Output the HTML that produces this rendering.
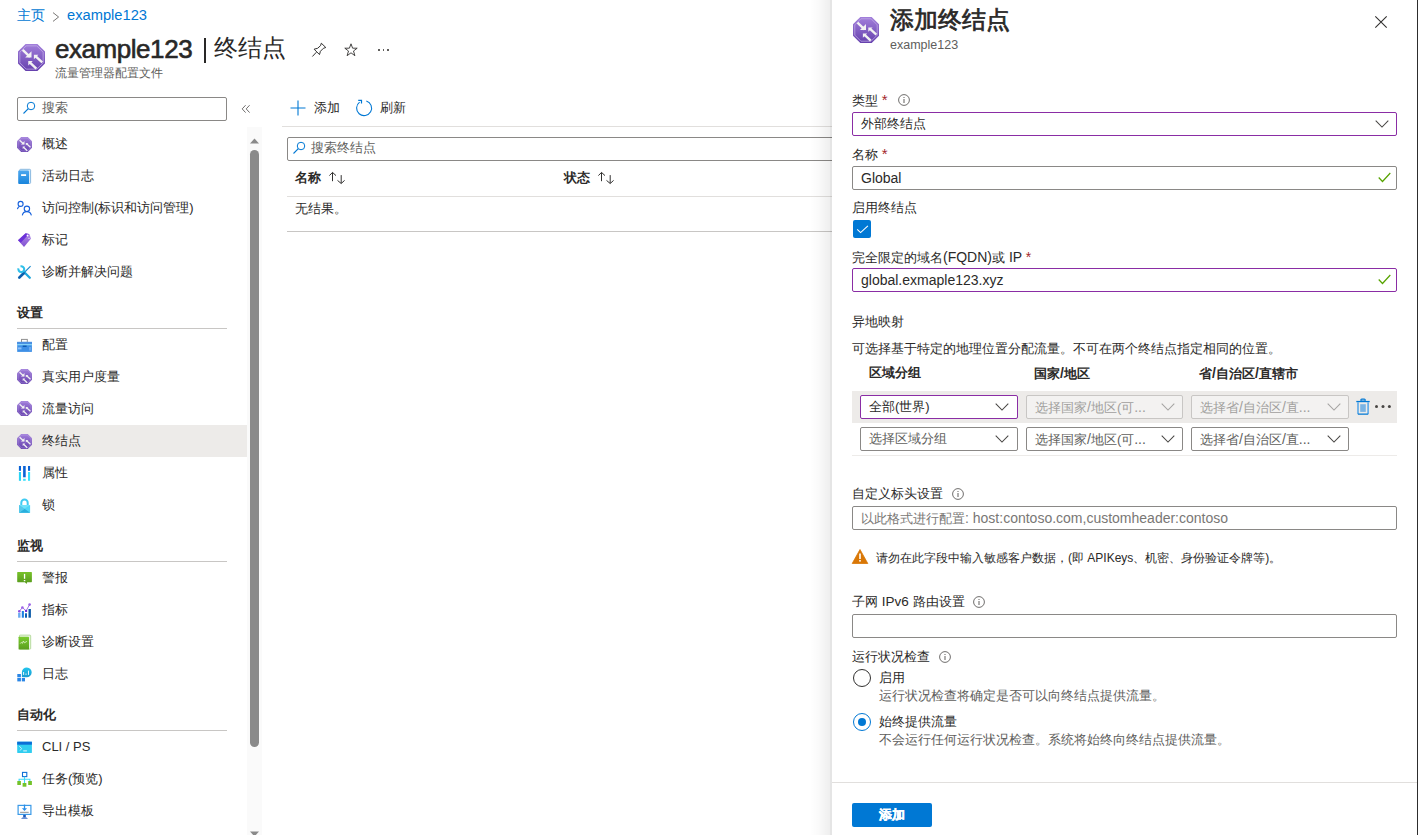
<!DOCTYPE html>
<html><head><meta charset="utf-8">
<style>
*{box-sizing:border-box;margin:0;padding:0}
html,body{width:1418px;height:835px;overflow:hidden;background:#fff}
body{font-family:"Liberation Sans",sans-serif;color:#2b2a29;font-size:13px;position:relative}
.a{position:absolute;white-space:nowrap;line-height:16px}
.bl{color:#0078d4}
.g{color:#605e5c}
.b{font-weight:bold}
.ln{position:absolute;height:1px;background:#e1dfdd}
.box{position:absolute;border:1px solid #8a8886;border-radius:2px;background:#fff;height:24px}
.pur{border-color:#8a2da5}
.dis{background:#f3f2f1;border-color:#c8c6c4;color:#a19f9d}
.ico{position:absolute;overflow:visible}
.mi{position:absolute;left:42px;line-height:16px;white-space:nowrap}
.mh{position:absolute;left:17px;line-height:16px;font-weight:bold;white-space:nowrap}
.red{color:#a4262c;font-size:15px}
.L{font-size:14px}
</style></head><body>
<svg width="0" height="0" style="position:absolute">
<defs>
<linearGradient id="tg" x1="0" y1="0" x2="0" y2="1"><stop offset="0" stop-color="#a27fdb"/><stop offset="1" stop-color="#6540ad"/></linearGradient>
<symbol id="tm" viewBox="0 0 26 26">
<path d="M7.3 0 H18.7 L26 7.3 V18.7 L18.7 26 H7.3 L0 18.7 V7.3 Z" fill="url(#tg)"/>
<path d="M7.9 1.8 H18.1 L24.2 7.9 V18.1 L18.1 24.2 H7.9 L1.8 18.1 V7.9 Z" fill="none" stroke="#c3aee8" stroke-width="0.9" opacity="0.8"/>
<path d="M4.5 5.6 L11.5 12.3" stroke="#f2f2f2" stroke-width="2.3"/>
<path d="M13 6.9 V13 H6.9 Z" fill="#f2f2f2"/>
<path d="M23.3 17.7 L16.8 11.7" stroke="#f2f2f2" stroke-width="2.3"/>
<path d="M15.3 10.4 H19.6 L15.3 14.8 Z" fill="#f2f2f2"/>
<path d="M17.7 23.7 L11.3 17.6" stroke="#f2f2f2" stroke-width="2.3"/>
<path d="M9.9 16.4 H14.2 L9.9 20.8 Z" fill="#f2f2f2"/>
</symbol>
<symbol id="info" viewBox="0 0 12 12"><circle cx="6" cy="6" r="5.4" fill="none" stroke="#605e5c" stroke-width="0.9"/><rect x="5.5" y="5" width="1" height="4" fill="#605e5c"/><rect x="5.5" y="3" width="1" height="1" fill="#605e5c"/></symbol>
<symbol id="chev" viewBox="0 0 14 8"><path d="M0.7 0.7 L7 7 L13.3 0.7" fill="none" stroke="#484644" stroke-width="1.05"/></symbol>
<symbol id="srch" viewBox="0 0 12 12" overflow="visible"><circle cx="8" cy="4" r="3.75" fill="none" stroke="#0078d4" stroke-width="1"/><path d="M5.3 6.7 L0.5 11.5" stroke="#0078d4" stroke-width="1.1"/></symbol>
</defs></svg>

<!-- breadcrumb -->
<div class="a bl" style="left:17px;top:7px;font-size:14px">主页</div>
<svg class="ico" style="left:52px;top:12px" width="8" height="11" viewBox="0 0 8 11"><path d="M1 0.6 L6.6 5 L1 9.4" fill="none" stroke="#797775" stroke-width="1"/></svg>
<div class="a bl" style="left:67px;top:7px;font-size:14.7px">example123</div>

<!-- title -->
<svg class="ico" style="left:18px;top:44px" width="27" height="27"><use href="#tm"/></svg>
<div class="a" style="left:55px;top:35px;font-size:26px;line-height:28px;color:#292827;letter-spacing:-0.45px;-webkit-text-stroke:0.6px #292827">example123</div>
<div class="ico" style="left:203.6px;top:37.5px;width:2px;height:25px;background:#292827"></div>
<div class="a" style="left:214px;top:34px;font-size:24px;line-height:28px;color:#292827">终结点</div>
<div class="a g" style="left:55px;top:65px;font-size:12px">流量管理器配置文件</div>
<svg class="ico" style="left:309px;top:40px" width="20" height="20" viewBox="0 0 20 20"><path d="M12.3 3.2 L16.8 7.5 L14.4 8.3 L11.4 11.3 L10.5 14.6 L5.1 9.2 L8.6 8.3 L11.6 5.6 Z M7.4 12.2 L3.4 16.5" fill="none" stroke="#323130" stroke-width="1" stroke-linejoin="round"/></svg>
<svg class="ico" style="left:344px;top:43px" width="14" height="14" viewBox="0 0 14 14"><path d="M7 0.8 L8.6 5.2 L13.2 5.2 L9.5 8 L10.9 12.7 L7 9.8 L3.1 12.7 L4.5 8 L0.8 5.2 L5.4 5.2 Z" fill="none" stroke="#323130" stroke-width="0.9"/></svg>
<div class="ico" style="left:378px;top:49px;width:1.6px;height:1.8px;background:#605e5c"></div>
<div class="ico" style="left:382.5px;top:49px;width:1.6px;height:1.8px;background:#605e5c"></div>
<div class="ico" style="left:387px;top:49px;width:1.6px;height:1.8px;background:#605e5c"></div>

<!-- sidebar search -->
<div class="box" style="left:17px;top:97px;width:210px;height:24px"></div>
<svg class="ico" style="left:23px;top:102px" width="12" height="12"><use href="#srch"/></svg>
<div class="a g" style="left:42px;top:100px;font-size:13px">搜索</div>
<svg class="ico" style="left:240px;top:103px" width="12" height="12" viewBox="0 0 12 12"><path d="M5.6 2.2 L2.2 5.9 L5.6 9.6 M9.6 2.2 L6.2 5.9 L9.6 9.6" fill="none" stroke="#605e5c" stroke-width="0.9"/></svg>

<!-- scrollbar -->
<div class="ico" style="left:247px;top:127px;width:15px;height:708px;background:#fafafa"></div>
<svg class="ico" style="left:250px;top:138px" width="9" height="6"><path d="M0 5.5 L4.5 0.5 L9 5.5 Z" fill="#8a8a8a"/></svg>
<div class="ico" style="left:250px;top:150px;width:9px;height:597px;background:#8a8a8a;border-radius:4.5px"></div>
<svg class="ico" style="left:250px;top:831px" width="9" height="6"><path d="M0 0.5 L9 0.5 L4.5 5.5 Z" fill="#8a8a8a"/></svg>

<!-- selected -->
<div class="ico" style="left:0;top:425px;width:247px;height:32px;background:#edebe9"></div>

<!-- menu items -->
<svg class="ico" style="left:17px;top:137px" width="15" height="15"><use href="#tm"/></svg>
<div class="mi" style="top:136px">概述</div>
<svg class="ico" style="left:14px;top:166px" width="22" height="22" viewBox="0 0 22 22"><defs><linearGradient id="bk" x1="0" y1="0" x2="0" y2="1"><stop offset="0" stop-color="#4ca6ee"/><stop offset="1" stop-color="#1a85dc"/></linearGradient></defs><rect x="5.6" y="3.3" width="11" height="14.2" rx="1" fill="#d9ebf9" stroke="#72a9d9" stroke-width="0.8"/><rect x="4.2" y="4.6" width="10.8" height="13.3" rx="1" fill="url(#bk)"/><rect x="7.1" y="8.2" width="5" height="1.8" fill="#fff"/></svg>
<div class="mi" style="top:168px">活动日志</div>
<svg class="ico" style="left:14px;top:198px" width="22" height="22" viewBox="0 0 22 22"><g fill="none" stroke="#1560dc" stroke-width="1.1"><circle cx="6.6" cy="5.9" r="2.5"/><path d="M3.4 11.1 Q3.9 9 5.6 8.3"/><circle cx="12.9" cy="10.8" r="2.7"/><path d="M8.3 17.4 Q8.9 13.6 12.8 13.6 Q16.6 13.6 17.4 17.4"/></g></svg>
<div class="mi" style="top:200px">访问控制(标识和访问管理)</div>
<svg class="ico" style="left:14px;top:230px" width="22" height="22" viewBox="0 0 22 22"><defs><linearGradient id="tgg" x1="0" y1="0" x2="0" y2="1"><stop offset="0" stop-color="#b48ee8"/><stop offset="1" stop-color="#7f4fd0"/></linearGradient></defs><path d="M4 10.3 L11.6 3.2 L15.6 4.2 L16.9 8.7 L10 17.1 Z" fill="url(#tgg)"/><path d="M4 10.3 L11.6 3.2 L15 4 L6.8 12.8 Z" fill="#6b32d8"/><circle cx="13.5" cy="5.5" r="0.9" fill="#fff"/><rect x="14.2" y="7.9" width="1.6" height="0.8" fill="#e8e0f8"/></svg>
<div class="mi" style="top:232px">标记</div>
<svg class="ico" style="left:14px;top:262px" width="22" height="22" viewBox="0 0 22 22"><path d="M16.6 4.2 L10.3 10.5" stroke="#1a8cd0" stroke-width="1.1"/><path d="M9.8 9.8 L15.8 15.8" stroke="#1ea7dc" stroke-width="2.3" stroke-linecap="round"/><path d="M9.6 11.3 L5.3 15.6" stroke="#0b5fae" stroke-width="2.7" stroke-linecap="round"/><path d="M4.5 6.4 A2.9 2.9 0 1 0 6.5 4.4" fill="none" stroke="#2fc0ea" stroke-width="2.1"/></svg>
<div class="mi" style="top:264px">诊断并解决问题</div>

<div class="mh" style="top:305px">设置</div>
<div class="ln" style="left:17px;top:328px;width:210px;background:#c8c6c4"></div>

<svg class="ico" style="left:14px;top:334px" width="22" height="22" viewBox="0 0 22 22"><rect x="7.5" y="5.4" width="5.8" height="3" fill="none" stroke="#8f8f8f" stroke-width="1"/><rect x="3.2" y="7.9" width="14.7" height="10" fill="#3d8fe6"/><rect x="3.2" y="10" width="14.7" height="1.3" fill="#84d2f8"/><rect x="3.2" y="7.9" width="14.7" height="2.1" fill="#4a90e2"/><rect x="8.7" y="11.6" width="3.9" height="1.3" fill="#0b55a8"/><rect x="4" y="13.4" width="3.5" height="2" fill="#8dc0f8"/><rect x="15" y="13" width="2" height="3.5" fill="#6aa8ee"/></svg>
<div class="mi" style="top:337px">配置</div>
<svg class="ico" style="left:17px;top:369px" width="15" height="15"><use href="#tm"/></svg>
<div class="mi" style="top:369px">真实用户度量</div>
<svg class="ico" style="left:17px;top:401px" width="15" height="15"><use href="#tm"/></svg>
<div class="mi" style="top:401px">流量访问</div>
<svg class="ico" style="left:17px;top:434px" width="15" height="15"><use href="#tm"/></svg>
<div class="mi" style="top:433px">终结点</div>
<svg class="ico" style="left:14px;top:462px" width="22" height="22" viewBox="0 0 22 22"><rect x="4.9" y="4" width="2.1" height="4.8" fill="#0a63d6"/><rect x="4.9" y="10" width="2.1" height="8.8" fill="#2ad4f4"/><rect x="9.1" y="4" width="2.6" height="11.3" fill="#0a63d6"/><rect x="9.1" y="16.8" width="2.6" height="2" fill="#3ee0fb"/><rect x="14" y="4" width="2.1" height="4.8" fill="#0a63d6"/><rect x="14" y="10" width="2.1" height="8.8" fill="#38e0fb"/></svg>
<div class="mi" style="top:465px">属性</div>
<svg class="ico" style="left:14px;top:494px" width="22" height="22" viewBox="0 0 22 22"><path d="M7.3 11.2 V8.8 A3.2 3.2 0 0 1 13.7 8.8 V11.2" fill="none" stroke="#3fcbf2" stroke-width="2"/><rect x="5" y="11.1" width="11.1" height="7.7" fill="#4fd6f7"/><path d="M5 11.1 L10.5 14.8 L16.1 11.1 Z" fill="#6fe2fa"/><path d="M5 18.8 L10.5 14.8 L16.1 18.8 Z" fill="#2aaedc"/><path d="M5 11.1 L10.5 14.8 L5 18.8 Z" fill="#55c8ea"/></svg>
<div class="mi" style="top:497px">锁</div>

<div class="mh" style="top:538px">监视</div>
<div class="ln" style="left:17px;top:561px;width:210px;background:#c8c6c4"></div>

<svg class="ico" style="left:14px;top:566px" width="22" height="22" viewBox="0 0 22 22"><defs><linearGradient id="al" x1="0" y1="0" x2="0" y2="1"><stop offset="0" stop-color="#78c22a"/><stop offset="1" stop-color="#5a9e1e"/></linearGradient></defs><rect x="3.2" y="6" width="14.7" height="10.2" rx="0.6" fill="url(#al)"/><path d="M10.8 16 L12.6 17.9 L13.2 16 Z" fill="#5a9e1e"/><rect x="9.9" y="7.9" width="1.3" height="4.9" fill="#fff"/><rect x="9.8" y="14" width="1.5" height="1.2" fill="#fff"/></svg>
<div class="mi" style="top:570px">警报</div>
<svg class="ico" style="left:14px;top:598px" width="22" height="22" viewBox="0 0 22 22"><rect x="4.1" y="14.8" width="2.4" height="4.9" fill="#6aaaf0"/><rect x="7.8" y="13" width="2.1" height="6.7" fill="#1a7fe0"/><rect x="11" y="15.3" width="2" height="4.4" fill="#0b5fb5"/><rect x="14.5" y="11" width="2.4" height="8.7" fill="#0a5aa8"/><path d="M5.3 13.3 L8.4 9.5 L12.1 12.9 L15.6 6.6" fill="none" stroke="#9a62e6" stroke-width="0.9"/><circle cx="5.3" cy="13.3" r="1.3" fill="#8f52e2"/><circle cx="8.4" cy="9.5" r="1.3" fill="#9a62e6"/><circle cx="12.1" cy="12.9" r="1.2" fill="#6a2fd8"/><circle cx="15.6" cy="6.6" r="1.3" fill="#9a62e6"/></svg>
<div class="mi" style="top:602px">指标</div>
<svg class="ico" style="left:14px;top:630px" width="22" height="22" viewBox="0 0 22 22"><defs><linearGradient id="gb" x1="0" y1="0" x2="0" y2="1"><stop offset="0" stop-color="#7acc2e"/><stop offset="1" stop-color="#5a9e1e"/></linearGradient></defs><rect x="5.4" y="5.1" width="11.3" height="14" rx="0.8" fill="#eaf4e2" stroke="#a8d48a" stroke-width="0.8"/><rect x="4.6" y="6.7" width="10.4" height="12.8" rx="0.6" fill="url(#gb)"/><path d="M6.2 13.6 L7.3 12.4 L8.3 13.4 L9.4 11 L10.4 12.8 L12.9 11.4" fill="none" stroke="#e4f4d4" stroke-width="0.8"/></svg>
<div class="mi" style="top:634px">诊断设置</div>
<svg class="ico" style="left:14px;top:662px" width="22" height="22" viewBox="0 0 22 22"><rect x="3.3" y="12" width="3.6" height="3.2" fill="#2a86e6"/><rect x="3.3" y="15.9" width="3.6" height="3.5" fill="#2a86e6"/><rect x="7.8" y="15.9" width="3.2" height="3.5" fill="#2a86e6"/><defs><linearGradient id="lg" x1="0" y1="0" x2="0" y2="1"><stop offset="0" stop-color="#22c6ee"/><stop offset="1" stop-color="#1a9ad0"/></linearGradient></defs><path d="M7.9 15 V10.3 A4.9 4.9 0 1 1 12.4 15.2 Z" fill="url(#lg)"/><rect x="9.1" y="10" width="1" height="2.9" fill="#e8f8fc"/><rect x="11.5" y="11.5" width="1" height="1.4" fill="#e8f8fc"/><rect x="14.1" y="8.6" width="0.9" height="4.3" fill="#fff"/></svg>
<div class="mi" style="top:666px">日志</div>

<div class="mh" style="top:707px">自动化</div>
<div class="ln" style="left:17px;top:730px;width:210px;background:#c8c6c4"></div>

<svg class="ico" style="left:14px;top:736px" width="22" height="22" viewBox="0 0 22 22"><rect x="3.2" y="5.7" width="14.7" height="11.2" rx="0.4" fill="#2fcdf0"/><rect x="3.2" y="5.7" width="14.7" height="3" fill="#0a6ed6"/><path d="M5.3 10.1 L7.6 12.6 L6 14.6" fill="none" stroke="#d8f4fc" stroke-width="0.9"/><rect x="9.2" y="14.1" width="3.7" height="1.5" fill="#a6e8f8"/></svg>
<div class="mi" style="top:739px">CLI / PS</div>
<svg class="ico" style="left:14px;top:768px" width="22" height="22" viewBox="0 0 22 22"><rect x="8.5" y="4.4" width="4.3" height="4.2" fill="none" stroke="#0f6fd6" stroke-width="1.1"/><path d="M10.5 8.7 V15 M5.1 13 V11.3 H15.9 V13" fill="none" stroke="#40d8f8" stroke-width="1.1"/><rect x="3.3" y="13" width="3.6" height="4" fill="#74c22a"/><rect x="8.6" y="15" width="3.8" height="3.7" fill="#74c22a"/><rect x="14.2" y="13" width="3.7" height="4" fill="#74c22a"/></svg>
<div class="mi" style="top:771px">任务(预览)</div>
<svg class="ico" style="left:14px;top:800px" width="22" height="22" viewBox="0 0 22 22"><rect x="4.1" y="5.4" width="12.8" height="9" fill="#fff" stroke="#3a9ae8" stroke-width="1.2"/><path d="M10.5 4.6 V9" stroke="#2b8ee8" stroke-width="1.3"/><path d="M7.9 8.3 H13.1 L10.5 11 Z" fill="#2b8ee8"/><rect x="6.1" y="11.8" width="8.6" height="1.1" fill="#9a9a9a"/><rect x="9.2" y="14.9" width="2.6" height="2.6" fill="#1a56b8"/><path d="M7 18.7 L8.5 17.4 H12.5 L14 18.7 Z" fill="#3a6fc8"/></svg>
<div class="mi" style="top:803px">导出模板</div>

<!-- toolbar -->
<svg class="ico" style="left:290px;top:100px" width="16" height="16" viewBox="0 0 16 16"><path d="M8 0.5 V15.5 M0.5 8 H15.5" stroke="#0078d4" stroke-width="1.1"/></svg>
<div class="a" style="left:314px;top:100px">添加</div>
<svg class="ico" style="left:352px;top:96px" width="24" height="24" viewBox="0 0 24 24"><path d="M14.35 4.95 A7.5 7.5 0 1 1 7.6 6.1" fill="none" stroke="#0078d4" stroke-width="1.1"/><path d="M6.2 4.3 H9.5 V7.6" fill="none" stroke="#0078d4" stroke-width="1.2"/></svg>
<div class="a" style="left:380px;top:100px">刷新</div>
<div class="ln" style="left:282px;top:126px;width:560px"></div>

<div class="box" style="left:287px;top:137px;width:560px;height:24px"></div>
<svg class="ico" style="left:293px;top:142px" width="12" height="12"><use href="#srch"/></svg>
<div class="a g" style="left:311px;top:140px">搜索终结点</div>

<div class="a b" style="left:295px;top:170px">名称</div>
<svg class="ico" style="left:322px;top:168px" width="30" height="22" viewBox="0 0 30 22"><path d="M7.4 7.6 L10.5 4.4 L14 7.6 M10.5 4.6 V13.2 M15.5 12.4 L19.2 15.5 L22.6 12.4 M19.2 15.3 V7.1" fill="none" stroke="#323130" stroke-width="1"/></svg>
<div class="a b" style="left:564px;top:170px">状态</div>
<svg class="ico" style="left:591px;top:168px" width="30" height="22" viewBox="0 0 30 22"><path d="M7.4 7.6 L10.5 4.4 L14 7.6 M10.5 4.6 V13.2 M15.5 12.4 L19.2 15.5 L22.6 12.4 M19.2 15.3 V7.1" fill="none" stroke="#323130" stroke-width="1"/></svg>
<div class="ln" style="left:287px;top:196px;width:560px"></div>
<div class="a" style="left:295px;top:201px">无结果。</div>
<div class="ln" style="left:287px;top:231px;width:560px;background:#c8c6c4"></div>

<!-- right panel -->
<div class="ico" style="left:810px;top:0;width:20px;height:835px;background:linear-gradient(to right,rgba(0,0,0,0),rgba(0,0,0,0.02) 40%,rgba(0,0,0,0.065))"></div>
<div class="ico" style="left:830px;top:0;width:2px;height:835px;background:rgba(0,0,0,0.1)"></div>
<div class="ico" style="left:832px;top:0;width:586px;height:835px;background:#fff"></div>

<svg class="ico" style="left:853px;top:17px" width="26" height="26"><use href="#tm"/></svg>
<div class="a" style="left:890px;top:6px;font-size:24px;line-height:28px;color:#292827;-webkit-text-stroke:0.7px #292827">添加终结点</div>
<div class="a g" style="left:890px;top:37px;font-size:12.5px">example123</div>
<svg class="ico" style="left:1375px;top:16px" width="12" height="12" viewBox="0 0 12 12"><path d="M0.3 0.3 L11.7 11.7 M11.7 0.3 L0.3 11.7" stroke="#323130" stroke-width="1.1"/></svg>

<div class="a" style="left:852px;top:92px">类型 <span class="red">*</span></div>
<svg class="ico" style="left:898px;top:94px" width="12" height="12"><use href="#info"/></svg>
<div class="box pur" style="left:852px;top:112px;width:545px"></div>
<div class="a" style="left:861px;top:116px">外部终结点</div>
<svg class="ico" style="left:1374.5px;top:119.5px" width="14" height="8"><use href="#chev"/></svg>

<div class="a" style="left:852px;top:146px">名称 <span class="red">*</span></div>
<div class="box" style="left:852px;top:166px;width:545px"></div>
<div class="a" style="left:861px;top:170px"><span class="L">Global</span></div>
<svg class="ico" style="left:1378px;top:172px" width="13" height="11" viewBox="0 0 13 11"><path d="M0.7 5.5 L4.5 9.5 L12.3 1" fill="none" stroke="#57a300" stroke-width="1.2"/></svg>

<div class="a" style="left:852px;top:200px">启用终结点</div>
<div class="ico" style="left:853px;top:220px;width:18px;height:18px;background:#0078d4;border-radius:2px"></div>
<svg class="ico" style="left:853px;top:220px" width="18" height="18" viewBox="0 0 18 18"><path d="M4.2 9.4 L7.6 12.6 L14.9 5.9" fill="none" stroke="#fff" stroke-width="1.1"/></svg>

<div class="a" style="left:852px;top:249px">完全限定的域名<span class="L">(FQDN)</span>或<span class="L"> IP </span><span class="red L">*</span></div>
<div class="box pur" style="left:852px;top:268px;width:545px"></div>
<div class="a" style="left:861px;top:272px"><span class="L">global.exmaple123.xyz</span></div>
<svg class="ico" style="left:1378px;top:274px" width="13" height="11" viewBox="0 0 13 11"><path d="M0.7 5.5 L4.5 9.5 L12.3 1" fill="none" stroke="#57a300" stroke-width="1.2"/></svg>

<div class="a" style="left:852px;top:314px">异地映射</div>
<div class="a" style="left:852px;top:341px">可选择基于特定的地理位置分配流量。不可在两个终结点指定相同的位置。</div>
<div class="a b" style="left:869px;top:365px">区域分组</div>
<div class="a b" style="left:1034px;top:365px">国家<span class="L">/</span>地区</div>
<div class="a b" style="left:1199px;top:365px">省<span class="L">/</span>自治区<span class="L">/</span>直辖市</div>

<div class="ico" style="left:852px;top:391px;width:545px;height:32px;background:#edebe9"></div>
<div class="box pur" style="left:860px;top:395px;width:158px"></div>
<div class="a" style="left:869px;top:399px">全部(世界)</div>
<svg class="ico" style="left:995px;top:403px" width="14" height="8"><use href="#chev"/></svg>
<div class="box dis" style="left:1026px;top:395px;width:157px"></div>
<div class="a" style="left:1035px;top:399px;color:#a19f9d">选择国家<span class="L">/</span>地区(可<span class="L">...</span></div>
<svg class="ico" style="left:1161px;top:403px;opacity:0.45" width="14" height="8"><use href="#chev"/></svg>
<div class="box dis" style="left:1191px;top:395px;width:158px"></div>
<div class="a" style="left:1200px;top:399px;color:#a19f9d">选择省<span class="L">/</span>自治区<span class="L">/</span>直<span class="L">...</span></div>
<svg class="ico" style="left:1327px;top:403px;opacity:0.45" width="14" height="8"><use href="#chev"/></svg>
<svg class="ico" style="left:1352px;top:395px" width="44" height="24" viewBox="0 0 44 24"><rect x="8.8" y="4.1" width="4.5" height="2" rx="1" fill="none" stroke="#0078d4" stroke-width="1.1"/><rect x="4.3" y="5.9" width="13.4" height="1.3" fill="#0078d4"/><rect x="5.2" y="7.2" width="1.6" height="11.8" fill="#5aa8e8"/><rect x="15.3" y="7.2" width="1.6" height="11.8" fill="#5aa8e8"/><rect x="5.8" y="18.4" width="10.5" height="1.4" rx="0.6" fill="#0078d4"/><rect x="8.2" y="9.2" width="5.6" height="7.7" fill="#7ab4e4"/><circle cx="24.5" cy="11.5" r="1.5" fill="#484644"/><circle cx="31" cy="11.5" r="1.5" fill="#484644"/><circle cx="37.4" cy="11.5" r="1.5" fill="#484644"/></svg>

<div class="box" style="left:860px;top:427px;width:158px"></div>
<div class="a g" style="left:869px;top:431px">选择区域分组</div>
<svg class="ico" style="left:995px;top:435px" width="14" height="8"><use href="#chev"/></svg>
<div class="box" style="left:1026px;top:427px;width:157px"></div>
<div class="a g" style="left:1035px;top:431px">选择国家<span class="L">/</span>地区(可<span class="L">...</span></div>
<svg class="ico" style="left:1161px;top:435px" width="14" height="8"><use href="#chev"/></svg>
<div class="box" style="left:1191px;top:427px;width:158px"></div>
<div class="a g" style="left:1200px;top:431px">选择省<span class="L">/</span>自治区<span class="L">/</span>直<span class="L">...</span></div>
<svg class="ico" style="left:1327px;top:435px" width="14" height="8"><use href="#chev"/></svg>
<div class="ln" style="left:852px;top:455px;width:545px;background:#edebe9"></div>

<div class="a" style="left:852px;top:486px">自定义标头设置</div>
<svg class="ico" style="left:952px;top:488px" width="12" height="12"><use href="#info"/></svg>
<div class="box" style="left:852px;top:506px;width:545px"></div>
<div class="a" style="left:861px;top:510px;color:#797775">以此格式进行配置<span class="L">: host:contoso.com,customheader:contoso</span></div>

<svg class="ico" style="left:852px;top:549px" width="16" height="15" viewBox="0 0 16 15"><path d="M8 0.5 L15.8 14.5 H0.2 Z" fill="#d97706" stroke="#d97706" stroke-width="0.8" stroke-linejoin="round"/><rect x="7.2" y="4.5" width="1.6" height="5.5" fill="#fff"/><rect x="7.2" y="11" width="1.6" height="1.6" fill="#fff"/></svg>
<div class="a" style="left:876px;top:550px;font-size:12px">请勿在此字段中输入敏感客户数据，(即 APIKeys、机密、身份验证令牌等)。</div>

<div class="a" style="left:852px;top:594px">子网<span style="font-size:13.5px"> IPv6 </span>路由设置</div>
<svg class="ico" style="left:973px;top:596px" width="12" height="12"><use href="#info"/></svg>
<div class="box" style="left:852px;top:614px;width:545px"></div>

<div class="a" style="left:852px;top:649px">运行状况检查</div>
<svg class="ico" style="left:939px;top:651px" width="12" height="12"><use href="#info"/></svg>
<div class="ico" style="left:853px;top:669px;width:18px;height:18px;border:1px solid #323130;border-radius:50%"></div>
<div class="a" style="left:879px;top:670px">启用</div>
<div class="a g" style="left:879px;top:688px">运行状况检查将确定是否可以向终结点提供流量。</div>
<div class="ico" style="left:853px;top:713px;width:18px;height:18px;border:1px solid #0078d4;border-radius:50%"></div>
<div class="ico" style="left:858px;top:718px;width:8px;height:8px;background:#0078d4;border-radius:50%"></div>
<div class="a" style="left:879px;top:714px">始终提供流量</div>
<div class="a g" style="left:879px;top:732px">不会运行任何运行状况检查。系统将始终向终结点提供流量。</div>

<div class="ln" style="left:832px;top:782px;width:586px;background:#e1dfdd"></div>
<div class="ico" style="left:852px;top:803px;width:80px;height:24px;background:#0078d4;border-radius:2px"></div>
<div class="a b" style="left:852px;top:807px;width:80px;text-align:center;color:#fff;-webkit-text-stroke:0.35px #fff">添加</div>

<div class="ico" style="left:1417px;top:0;width:1px;height:835px;background:#2d2d2d"></div>
</body></html>
